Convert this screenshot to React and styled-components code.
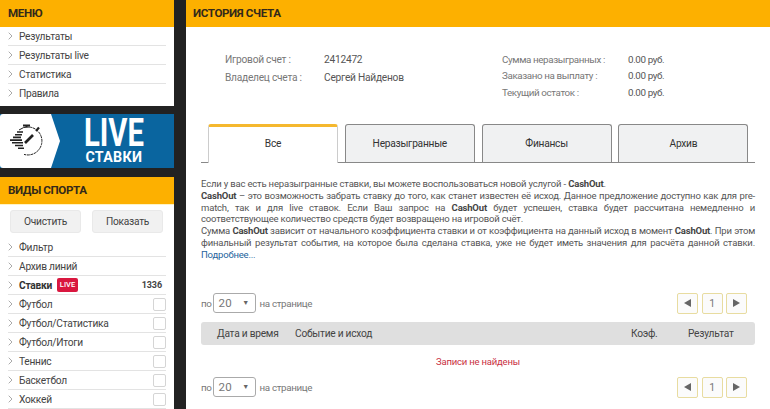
import React from "react";
import styled, { createGlobalStyle } from "styled-components";

const Global = createGlobalStyle`
  html, body { margin: 0; padding: 0; background: #222; }
  body { font-family: Roboto, "Liberation Sans", sans-serif; width: 770px; height: 409px; overflow: hidden; }
  #root { width: 770px; height: 409px; overflow: hidden; }
`;

const Page = styled.div`display: flex; width: 770px; height: 409px; background: #222222; overflow: hidden;`;
const Sidebar = styled.aside`width: 174px; flex: none; display: flex; flex-direction: column;`;
const Main = styled.main`margin-left: 12px; width: 584px; flex: none; background: #fff; display: flex; flex-direction: column;`;
const Header = styled.div`
  height: 27px; flex: none; background: #fdb000; color: #33291a; font-weight: 700; font-size: 11.6px;
  display: flex; align-items: center; padding-left: 8px; letter-spacing: -0.38px; padding-bottom: 1px; box-sizing: border-box;
`;
const MainHeader = styled(Header)`padding-left: 7px;`;
const List = styled.div`background: #fff; padding: 0 8px ${p => p.$pb || 0}px; display: flex; flex-direction: column;`;
const Row = styled.div`
  height: 19px; box-sizing: border-box; display: flex; align-items: center; font-size: 10.2px; color: #444;
  border-bottom: 1px solid ${p => (p.$last ? "transparent" : "#e3e3e3")}; letter-spacing: -0.25px;
`;
const Chevron = styled.svg`width: 5px; height: 8px; flex: none; margin-right: 6px;`;
const Caret = () => (
  <Chevron viewBox="0 0 5 8"><path d="M0.7 0.7 L4 4 L0.7 7.3" fill="none" stroke="#aaa" strokeWidth="1" /></Chevron>
);
const Banner = styled.div`margin: 8px 0 9px; height: 54px; display: flex; background: #0a659f; position: relative;`;
const Sport = styled.div`display: flex; flex-direction: column;`;
const Badge = styled.svg`width: 61px; height: 54px; flex: none;`;
const LiveText = styled.div`
  flex: 1; display: flex; flex-direction: column; align-items: center; color: #fff; font-weight: 700; padding-right: 8px;
`;
const LiveBig = styled.span`font-size: 38px; line-height: 30px; height: 30px; margin-top: 4px; transform: scaleX(0.77);`;
const LiveSmall = styled.span`font-size: 15.5px; line-height: 15px; margin-top: 2px; letter-spacing: 0.3px; transform: scaleX(0.92);`;
const Filters = styled.div`background: #fff; padding: 5px 11px 5px 10px; display: flex; justify-content: space-between; border-top: 1px solid #fff3c4;`;
const FilterBtn = styled.button`
  width: 71px; height: 23px; border: 1px solid #e9e9e9; border-radius: 3px; background: #f1f1f1; color: #444;
  font: 400 10.2px Roboto, sans-serif; letter-spacing: -0.25px; padding: 0;
`;
const Bold = styled.b`color: #333; font-weight: 700;`;
const LiveTag = styled.span`
  background: #d9173f; color: #fff; font-size: 7.5px; font-weight: 500; border-radius: 2px; width: 21px; text-align: center; height: 14px;
  line-height: 14px; margin-left: 5px; letter-spacing: 0;
`;
const Count = styled.span`margin-left: auto; margin-right: 4px; font-weight: 700; font-size: 9px; letter-spacing: -0.1px; color: #444;`;
const Check = styled.span`
  margin-left: auto; width: 13px; height: 13px; box-sizing: border-box; border: 1px solid #d5d5d5; border-radius: 2px; background: #fff;
`;
const Info = styled.section`display: flex; height: 97px; box-sizing: border-box; padding: 22px 0 0 39px; font-size: 10.2px; letter-spacing: -0.25px; color: #666;`;
const InfoLeft = styled.div`width: 277px; flex: none; display: grid; grid-template-columns: 99px 1fr; grid-auto-rows: 18px; align-content: start; margin-top: 1px;`;
const InfoRight = styled.div`display: grid; grid-template-columns: 126px 1fr; grid-auto-rows: 16.5px; align-content: start; font-size: 9.8px; letter-spacing: -0.38px; margin-top: 2px;`;
const Key = styled.span`color: #777; white-space: nowrap; align-self: center;`;
const Val = styled.span`color: #555; white-space: nowrap; align-self: center;`;
const Tabs = styled.div`display: flex; gap: 6.8px; margin: 0 15px; padding-left: 7px; height: 38px; border-bottom: 1px solid #888; flex: none;`;
const Tab = styled.div`
  width: 130px; height: 38px; box-sizing: border-box; display: flex; align-items: center; justify-content: center; font-size: 10.2px; letter-spacing: -0.25px; color: #333;
  border-radius: 3px 3px 0 0; position: relative;
  ${p => p.$active
    ? `background:#fff; border:1px solid #ccc; border-top:3px solid #f5b82e; border-bottom:0; height:39px; z-index:1; padding-bottom:3px;`
    : `background:#f0f1f2; border:1px solid #888; border-bottom:0;`}
`;
const Prose = styled.div`
  margin: 15px 15px 0 15px; font-size: 9.5px; line-height: 11.8px; color: #555; height: 115px; letter-spacing: -0.18px;
`;
const Line = styled.div`text-align: ${p => (p.$plain ? "left" : "justify")}; text-align-last: ${p => (p.$plain ? "left" : "justify")}; white-space: nowrap;`;
const More = styled.a`color: #24639c;`;
const ProseBold = styled.b`color: #444; font-weight: 700;`;
const Pager = styled.div`display: flex; align-items: center; height: 20px; margin: ${p => p.$m}; padding: 0 23px 0 15px; font-size: 9.8px; letter-spacing: -0.35px; color: #777;`;
const Select = styled.div`
  width: 43px; height: 20px; box-sizing: border-box; border: 1px solid #aaa; border-radius: 3px; margin: 0 4px 0 1px; display: flex; align-items: center;
  justify-content: space-between; padding: 0 5px; font-size: 11.5px; color: #777; letter-spacing: 0.3px;
`;
const SelectArrow = styled.span`font-size: 7px; color: #666;`;
const PageBtns = styled.div`margin-left: auto; display: flex; gap: 3.5px;`;
const PageBtn = styled.div`
  width: 21px; height: 21px; box-sizing: border-box; border: 1px solid #e8dca0; border-radius: 2px; background: #fbfbfb; display: flex; align-items: center; justify-content: center; color: #777; font-size: 10.5px;
`;
const Arrow = styled.svg`width: 9px; height: 8px;`;
const TableHead = styled.div`
  margin: 9px 15px 0; height: 23px; background: #dfdfdf; border-radius: 3px; display: grid; grid-template-columns: 78px 336px 57px 1fr; align-items: center;
  padding-left: 16px; font-size: 10.2px; letter-spacing: -0.25px; color: #444;
`;
const Empty = styled.div`text-align: center; color: #c9303f; font-size: 9.5px; letter-spacing: -0.2px; margin-top: 11px; height: 12px; line-height: 12px;`;

const Pagination = ({ m }) => (
  <Pager $m={m}>
    по
    <Select>20<SelectArrow>▼</SelectArrow></Select>
    на странице
    <PageBtns>
      <PageBtn><Arrow viewBox="0 0 9 8"><path d="M8 0 V8 L1 4 Z" fill="#666" /></Arrow></PageBtn>
      <PageBtn>1</PageBtn>
      <PageBtn><Arrow viewBox="0 0 9 8"><path d="M1 0 V8 L8 4 Z" fill="#666" /></Arrow></PageBtn>
    </PageBtns>
  </Pager>
);

const sports = ["Футбол", "Футбол/Статистика", "Футбол/Итоги", "Теннис", "Баскетбол", "Хоккей"];

export default function App() {
  return (
    <Page>
      <Global />
      <Sidebar>
        <Header>МЕНЮ</Header>
        <List $pb={3}>
          {["Результаты", "Результаты live", "Статистика", "Правила"].map((t, i) => (
            <Row key={t} $last={i === 3}><Caret />{t}</Row>
          ))}
        </List>
        <Banner>
          <Badge viewBox="0 0 61 54">
            <path d="M0 3 Q0 0 3 0 H51 L60 27 L51 54 H3 Q0 54 0 51 Z" fill="#fff" />
            <g fill="none" stroke="#222">
              <path d="M29 13 A14 14 0 1 1 24 40.4" strokeWidth="1" strokeDasharray="3 0.7" />
              <path d="M19 16 A14 14 0 0 1 29 13" strokeWidth="1" />
              <path d="M23 11.5 H30 M26.5 11.5 V13" strokeWidth="2" />
              <path d="M36 17 L39 13.5" strokeWidth="2.2" />
              <path d="M25 29 L33 21" strokeWidth="2.6" />
              <path d="M17 18 H23 M15 20.7 H22 M13 23.4 H21 M10 26.1 H22 M12 28.8 H23 M15 31.5 H23 M18 34.2 H24" strokeWidth="1.6" />
            </g>
          </Badge>
          <LiveText>
            <LiveBig>LIVE</LiveBig>
            <LiveSmall>СТАВКИ</LiveSmall>
          </LiveText>
        </Banner>
        <Header>ВИДЫ СПОРТА</Header>
        <Sport>
          <Filters>
            <FilterBtn>Очистить</FilterBtn>
            <FilterBtn>Показать</FilterBtn>
          </Filters>
          <List>
            <Row><Caret />Фильтр</Row>
            <Row><Caret />Архив линий</Row>
            <Row><Caret /><Bold>Ставки</Bold><LiveTag>LIVE</LiveTag><Count>1336</Count></Row>
            {sports.map(s => (
              <Row key={s}><Caret />{s}<Check /></Row>
            ))}
          </List>
        </Sport>
      </Sidebar>
      <Main>
        <MainHeader>ИСТОРИЯ СЧЕТА</MainHeader>
        <Info>
          <InfoLeft>
            <Key>Игровой счет :</Key><Val>2412472</Val>
            <Key>Владелец счета :</Key><Val>Сергей Найденов</Val>
          </InfoLeft>
          <InfoRight>
            <Key>Сумма неразыгранных :</Key><Val>0.00 руб.</Val>
            <Key>Заказано на выплату :</Key><Val>0.00 руб.</Val>
            <Key>Текущий остаток :</Key><Val>0.00 руб.</Val>
          </InfoRight>
        </Info>
        <Tabs>
          <Tab $active>Все</Tab>
          <Tab>Неразыгранные</Tab>
          <Tab>Финансы</Tab>
          <Tab>Архив</Tab>
        </Tabs>
        <Prose>
          <Line $plain>Если у вас есть неразыгранные ставки, вы можете воспользоваться новой услугой - <ProseBold>CashOut</ProseBold>.</Line>
          <Line><ProseBold>CashOut</ProseBold> – это возможность забрать ставку до того, как станет известен её исход. Данное предложение доступно как для pre-</Line>
          <Line>match, так и для live ставок. Если Ваш запрос на <ProseBold>CashOut</ProseBold> будет успешен, ставка будет рассчитана немедленно и</Line>
          <Line $plain>соответствующее количество средств будет возвращено на игровой счёт.</Line>
          <Line>Сумма <ProseBold>CashOut</ProseBold> зависит от начального коэффициента ставки и от коэффициента на данный исход в момент <ProseBold>CashOut</ProseBold>. При этом</Line>
          <Line>финальный результат события, на которое была сделана ставка, уже не будет иметь значения для расчёта данной ставки.</Line>
          <Line $plain><More>Подробнее...</More></Line>
        </Prose>
        <Pagination m="0" />
        <TableHead>
          <span>Дата и время</span><span>Событие и исход</span><span>Коэф.</span><span>Результат</span>
        </TableHead>
        <Empty>Записи не найдены</Empty>
        <Pagination m="9px 0 0" />
      </Main>
    </Page>
  );
}
